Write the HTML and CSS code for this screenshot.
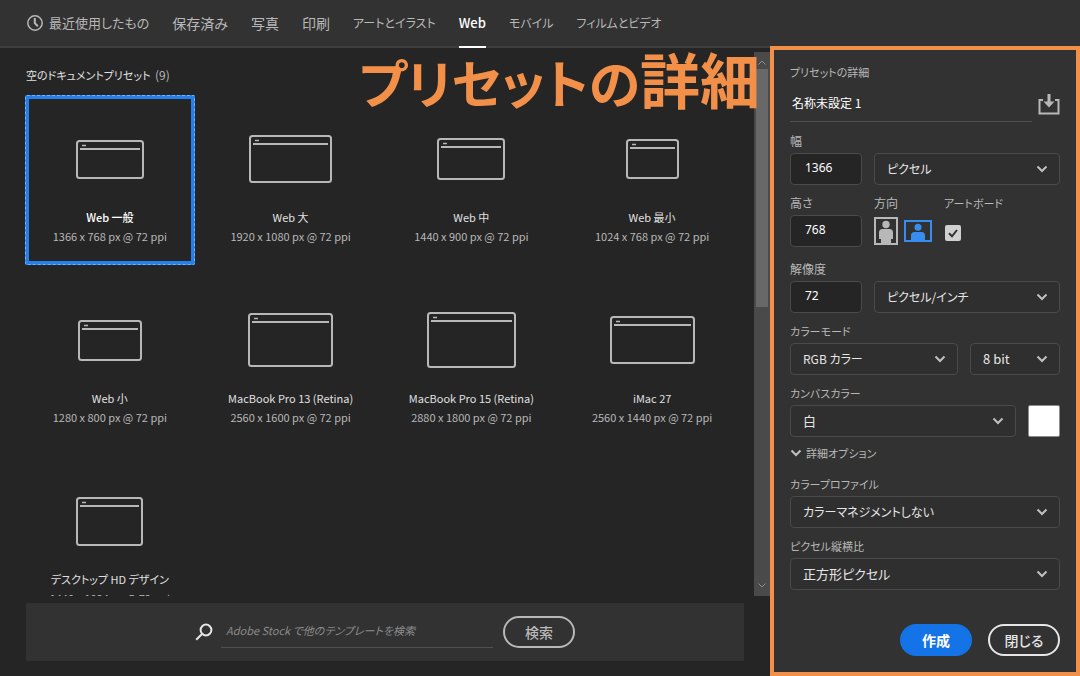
FILE: index.html
```html
<!DOCTYPE html>
<html lang="ja">
<head>
<meta charset="utf-8">
<title>新規ドキュメント</title>
<link rel="stylesheet" href="styles.css">
</head>
<body>
<div class="dialog">
  <nav class="tabs">
    <a class="tab tab-mixed" href="#recent"><svg class="clock" viewBox="0 0 16 16" width="16" height="16"><circle cx="8" cy="8" r="7.2"/><path class="hand" d="M7.8 3v5.2l3 3"/></svg>最近使用したもの</a>
    <a class="tab" href="#saved">保存済み</a>
    <a class="tab" href="#photo">写真</a>
    <a class="tab" href="#print">印刷</a>
    <a class="tab tab-kana" href="#art">アートとイラスト</a>
    <a class="tab tab-mixed tab-active" href="#web" aria-current="page">Web</a>
    <a class="tab tab-kana" href="#mobile">モバイル</a>
    <a class="tab tab-kana" href="#film">フィルムとビデオ</a>
  </nav>

  <main class="browser">
    <div class="scroller">
      <section class="presets">
        <h2 class="presets-title">空のドキュメントプリセット <span class="count">(9)</span></h2>
        <div class="preset-grid">
          <button class="preset preset-selected"><span class="thumb"><svg width="68" height="39"><rect class="frame" x="1" y="1" width="66" height="37" rx="2.500"/><path class="bar" d="M4 9h60"/><path class="dot" d="M6 5.500h4"/></svg></span><span class="name">Web 一般</span><span class="size">1366 x 768 px @ 72 ppi</span></button>
          <button class="preset"><span class="thumb"><svg width="83" height="48"><rect class="frame" x="1" y="1" width="81" height="46" rx="2.500"/><path class="bar" d="M4 9h75"/><path class="dot" d="M6 5.500h4"/></svg></span><span class="name">Web 大</span><span class="size">1920 x 1080 px @ 72 ppi</span></button>
          <button class="preset"><span class="thumb"><svg width="68" height="42"><rect class="frame" x="1" y="1" width="66" height="40" rx="2.500"/><path class="bar" d="M4 9h60"/><path class="dot" d="M6 5.500h4"/></svg></span><span class="name">Web 中</span><span class="size">1440 x 900 px @ 72 ppi</span></button>
          <button class="preset"><span class="thumb"><svg width="53" height="40"><rect class="frame" x="1" y="1" width="51" height="38" rx="2.500"/><path class="bar" d="M4 9h45"/><path class="dot" d="M6 5.500h4"/></svg></span><span class="name">Web 最小</span><span class="size">1024 x 768 px @ 72 ppi</span></button>
          <button class="preset"><span class="thumb"><svg width="64" height="41"><rect class="frame" x="1" y="1" width="62" height="39" rx="2.500"/><path class="bar" d="M4 9h56"/><path class="dot" d="M6 5.500h4"/></svg></span><span class="name">Web 小</span><span class="size">1280 x 800 px @ 72 ppi</span></button>
          <button class="preset"><span class="thumb"><svg width="85" height="54"><rect class="frame" x="1" y="1" width="83" height="52" rx="2.500"/><path class="bar" d="M4 9h77"/><path class="dot" d="M6 5.500h4"/></svg></span><span class="name">MacBook Pro 13 (Retina)</span><span class="size">2560 x 1600 px @ 72 ppi</span></button>
          <button class="preset"><span class="thumb"><svg width="89" height="56"><rect class="frame" x="1" y="1" width="87" height="54" rx="2.500"/><path class="bar" d="M4 9h81"/><path class="dot" d="M6 5.500h4"/></svg></span><span class="name">MacBook Pro 15 (Retina)</span><span class="size">2880 x 1800 px @ 72 ppi</span></button>
          <button class="preset"><span class="thumb"><svg width="85" height="48"><rect class="frame" x="1" y="1" width="83" height="46" rx="2.500"/><path class="bar" d="M4 9h77"/><path class="dot" d="M6 5.500h4"/></svg></span><span class="name">iMac 27</span><span class="size">2560 x 1440 px @ 72 ppi</span></button>
          <button class="preset"><span class="thumb"><svg width="67" height="49"><rect class="frame" x="1" y="1" width="65" height="47" rx="2.500"/><path class="bar" d="M4 9h59"/><path class="dot" d="M6 5.500h4"/></svg></span><span class="name">デスクトップ HD デザイン</span><span class="size">1440 x 1024 px @ 72 ppi</span></button>
        </div>
      </section>
      <div class="scrollbar" aria-hidden="true">
        <svg width="8" height="5" viewBox="0 0 8 5"><path d="M.5 4.500 4 1l3.500 3.500"/></svg>
        <div class="scroll-thumb"></div>
        <svg width="8" height="5" viewBox="0 0 8 5"><path d="M.5.5 4 4 7.500.5"/></svg>
      </div>
    </div>
    <form class="search">
      <svg class="search-icon" width="18" height="18" viewBox="0 0 18 18"><circle cx="11" cy="7" r="5.400"/><path d="M7 11 1.200 16.800"/></svg>
      <input class="search-input" type="text" aria-label="Adobe Stock 検索" placeholder="Adobe Stock で他のテンプレートを検索">
      <button class="pill pill-search" type="button">検索</button>
    </form>
  </main>

  <form class="details">
    <h2 class="details-title">プリセットの詳細</h2>
    <div class="name-row">
      <input class="name-input" type="text" aria-label="名前" value="名称未設定 1">
      <button class="save" type="button" aria-label="プリセットを保存"><svg width="22" height="21" viewBox="0 0 22 21"><path class="tray" d="M5 6H1.500v13.500h19V6H17"/><path class="stem" d="M11 0v8"/><path class="head" d="M5.500 7.500h11L11 13.500z"/></svg></button>
    </div>

    <div class="pair">
      <div class="field"><label for="w">幅</label><input class="box" id="w" type="text" value="1366"></div>
      <span class="select"><select class="kana" aria-label="単位"><option>ピクセル</option></select><svg class="chevron" width="12" height="8" viewBox="0 0 12 8"><path d="m1.500 1.500 4.500 4.500 4.500-4.500"/></svg></span>
    </div>

    <div class="pair">
      <div class="field"><label for="h">高さ</label><input class="box" id="h" type="text" value="768"></div>
      <div class="options">
        <div class="field"><span class="caption">方向</span>
          <div class="orient">
            <button type="button" aria-label="縦"><svg class="portrait" width="24" height="28" viewBox="0 0 24 28"><rect class="edge" x="1" y="1" width="22" height="26"/><circle cx="12" cy="7.500" r="3.700"/><path d="M5 15.500Q5 12 8.500 12h7q3.500 0 3.500 3.500V22h-2v5H7v-5H5z"/></svg></button>
            <button type="button" aria-label="横" aria-pressed="true"><svg class="landscape" width="28" height="22" viewBox="0 0 28 22"><rect class="edge" x="1" y="1" width="26" height="20"/><circle cx="14" cy="7.200" r="3.500"/><path d="M7 21v-5.500q0-3.500 3.500-3.500h7q3.500 0 3.500 3.500V21z"/></svg></button>
          </div>
        </div>
        <div class="field"><label class="kana-label" for="artboard">アートボード</label>
          <span class="check"><input id="artboard" type="checkbox" checked><svg width="16" height="16" viewBox="0 0 16 16"><path d="m4 8.300 3 3L12 5"/></svg></span>
        </div>
      </div>
    </div>

    <div class="pair pair-spaced">
      <div class="field"><label for="res">解像度</label><input class="box" id="res" type="text" value="72"></div>
      <span class="select"><select class="kana" aria-label="解像度の単位"><option>ピクセル/インチ</option></select><svg class="chevron" width="12" height="8" viewBox="0 0 12 8"><path d="m1.500 1.500 4.500 4.500 4.500-4.500"/></svg></span>
    </div>

    <div class="field">
      <label class="kana-label" for="mode">カラーモード</label>
      <div class="line">
        <span class="select grow"><select class="kana" id="mode"><option>RGB カラー</option></select><svg class="chevron" width="12" height="8" viewBox="0 0 12 8"><path d="m1.500 1.500 4.500 4.500 4.500-4.500"/></svg></span>
        <span class="select depth"><select aria-label="ビット数"><option>8 bit</option></select><svg class="chevron" width="12" height="8" viewBox="0 0 12 8"><path d="m1.500 1.500 4.500 4.500 4.500-4.500"/></svg></span>
      </div>
    </div>

    <div class="field">
      <label class="kana-label" for="canvas">カンバスカラー</label>
      <div class="line">
        <span class="select grow"><select id="canvas"><option>白</option></select><svg class="chevron" width="12" height="8" viewBox="0 0 12 8"><path d="m1.500 1.500 4.500 4.500 4.500-4.500"/></svg></span>
        <button class="swatch" type="button" aria-label="カンバスカラーを選択"></button>
      </div>
    </div>

    <button class="advanced kana-label" type="button" aria-expanded="true"><svg class="chevron" width="12" height="8" viewBox="0 0 12 8"><path d="m1.500 1.500 4.500 4.500 4.500-4.500"/></svg>詳細オプション</button>

    <div class="field field-first">
      <label class="kana-label" for="profile">カラープロファイル</label>
      <span class="select"><select class="kana" id="profile"><option>カラーマネジメントしない</option></select><svg class="chevron" width="12" height="8" viewBox="0 0 12 8"><path d="m1.500 1.500 4.500 4.500 4.500-4.500"/></svg></span>
    </div>
    <div class="field">
      <label class="kana-label" for="aspect">ピクセル縦横比</label>
      <span class="select"><select id="aspect"><option>正方形ピクセル</option></select><svg class="chevron" width="12" height="8" viewBox="0 0 12 8"><path d="m1.500 1.500 4.500 4.500 4.500-4.500"/></svg></span>
    </div>

    <div class="actions">
      <button class="pill pill-primary" type="button">作成</button>
      <button class="pill pill-close" type="button">閉じる</button>
    </div>
  </form>
  <p class="callout">プリセットの<span class="callout-kanji">詳細</span></p>
</div>
</body>
</html>
```
FILE: styles.css
```css
* { box-sizing: border-box; }

body {
  margin: 0;
  background: #252525;
  color: #b8b8b8;
  font: 12px/16px "Noto Sans CJK JP", sans-serif;
  font-feature-settings: "palt";
}

h2, p { margin: 0; font-weight: 400; }

button, input, select {
  margin: 0;
  padding: 0;
  border: 0;
  background: none;
  color: inherit;
  font: inherit;
  font-feature-settings: inherit;
}

svg { display: block; fill: none; }

.dialog {
  position: relative;
  display: grid;
  grid-template: 48px minmax(0, 1fr) / minmax(0, 1fr) 310px;
  height: 100vh;
}

/* Tabs */
.tabs {
  grid-column: 1 / -1;
  display: flex;
  gap: 23px;
  padding-left: 27px;
  background: #323232;
  border-bottom: 2px solid #3e3e3e;
}

.tab {
  display: flex;
  align-items: center;
  gap: 6px;
  height: 48px;
  border-bottom: 2px solid transparent;
  color: #b8b8b8;
  font-size: 14px;
  text-decoration: none;
  white-space: nowrap;
}

.tab-mixed { font-size: 13px; }
.tab-kana { font-size: 12px; }
.tab-active { border-color: #fff; color: #fff; font-weight: 500; }

.clock { stroke: #b8b8b8; stroke-width: 1.5; }
.clock .hand { stroke-width: 2; }

/* Preset browser */
.browser {
  display: flex;
  flex-direction: column;
  min-height: 0;
  padding-bottom: 15px;
}

.scroller { flex: 1; display: flex; min-height: 0; padding-top: 4px; }

.presets { flex: 1; overflow: hidden; padding: 14px 17px 0 25px; }

.presets-title { margin: 0 1px 11px; color: #e0e0e0; font-size: 11px; line-height: 18px; }
.count { margin-left: 2px; color: #b8b8b8; font-size: 12px; }

.preset-grid { display: grid; grid-template-columns: repeat(4, 1fr); gap: 11px; }

.preset {
  display: flex;
  flex-direction: column;
  align-items: center;
  height: 170px;
  padding-top: 24px;
  font-size: 11px;
  white-space: nowrap;
}

.preset-selected { outline: 1px dashed #6fb2f5; outline-offset: -1px; box-shadow: inset 0 0 0 4px #2680eb; border-radius: 2px; }

.thumb { display: grid; place-items: center; height: 80px; margin-bottom: 10px; }
.frame { stroke: #b8b8b8; stroke-width: 2; }
.bar { stroke: #b8b8b8; stroke-width: 2; }
.dot { stroke: #b8b8b8; stroke-width: 1.5; }

.name { margin-bottom: 3px; color: #e0e0e0; }
.preset-selected .name { color: #fff; font-weight: 500; }

.scrollbar {
  display: flex;
  flex-direction: column;
  align-items: center;
  width: 16px;
  padding: 8px 0;
  background: #4a4a4a;
}

.scrollbar svg { stroke: #8c8c8c; }
.scrollbar svg:last-child { margin-top: auto; }
.scroll-thumb { width: 12px; height: 45%; margin-top: 4px; background: #686868; }

/* Stock search */
.search {
  display: flex;
  align-items: center;
  justify-content: center;
  height: 58px;
  margin: 7px 26px 0;
  background: #323232;
}

.search-icon { margin-right: 8px; stroke: #e6e6e6; stroke-width: 2; }

.search-input {
  width: 272px;
  height: 32px;
  margin-right: 10px;
  padding: 0 5px 4px;
  border-bottom: 1px solid #505050;
  font-size: 11px;
  font-style: italic;
}

.search-input::placeholder { color: #8c8c8c; opacity: 1; }

.pill {
  width: 72px;
  height: 32px;
  border: 2px solid #b8b8b8;
  border-radius: 16px;
  font-size: 14px;
  font-weight: 500;
}

/* Details panel */
.details {
  display: flex;
  flex-direction: column;
  gap: 10px;
  margin-top: -2px;
  padding: 14px 16px 16px;
  border: 4px solid #f29049;
  background: #323232;
}

.details-title { font-size: 11px; line-height: 16px; }

.name-row { display: flex; align-items: center; gap: 6px; height: 36px; margin: -4px 0 1px; }

.name-input {
  flex: 1;
  min-width: 0;
  height: 36px;
  padding: 0 2px 2px;
  border-bottom: 1px solid #505050;
  color: #fff;
  font-feature-settings: normal;
}

.save { flex: none; }
.save .tray, .save .stem { stroke: #b8b8b8; stroke-width: 3; }
.save .tray { stroke-width: 2; }
.save .head { fill: #b8b8b8; }

.pair { display: grid; grid-template-columns: 72px minmax(0, 1fr); gap: 12px; align-items: end; }
.pair-spaced { margin-top: 4px; }

.field { display: flex; flex-direction: column; gap: 4px; min-width: 0; }
.field-first { margin-top: 5px; }
.kana-label { font-size: 11px; }

.box {
  width: 100%;
  height: 32px;
  padding: 0 14px 4px;
  border: 1px solid #4a4a4a;
  border-radius: 4px;
  background: #252525;
  color: #fff;
  font: 12px/16px "Noto Sans", sans-serif;
}

.select { display: grid; align-items: center; min-width: 0; }
.select > * { grid-area: 1 / 1; }

select {
  width: 100%;
  height: 32px;
  padding: 0 32px 0 12px;
  border: 1px solid #4a4a4a;
  border-radius: 4px;
  background: #2f2f2f;
  color: #e6e6e6;
  font-size: 13px;
  appearance: none;
}

select.kana { font-size: 12px; }

.chevron { stroke: #c0c0c0; stroke-width: 2; }
.select .chevron { justify-self: end; margin-right: 12px; pointer-events: none; }

.options { display: flex; gap: 12px; }
.orient { display: flex; align-items: center; gap: 6px; height: 32px; }
.portrait .edge { stroke: #b8b8b8; stroke-width: 2; fill: none; }
.portrait { fill: #b8b8b8; }
.landscape .edge { stroke: #378ef0; stroke-width: 2; fill: none; }
.landscape { fill: #378ef0; }

.check { display: grid; align-content: center; height: 32px; margin-top: 2px; margin-bottom: -2px; }
.check > * { grid-area: 1 / 1; }
.check input { width: 16px; height: 16px; margin-left: 1px; border-radius: 2px; background: #d0d0d0; appearance: none; }
.check svg { margin-left: 1px; stroke: #323232; stroke-width: 2; pointer-events: none; }

.line { display: flex; gap: 12px; }
.grow { flex: 1; }
.depth { width: 90px; }
.swatch { width: 32px; height: 32px; border: 1px solid #8c8c8c; border-radius: 2px; background: #fff; }

.advanced { display: flex; align-items: center; align-self: flex-start; gap: 4px; height: 16px; margin-top: -2px; }

.actions { display: flex; justify-content: flex-end; gap: 16px; margin-top: auto; }
.pill-primary { border-color: #1473e6; background: #1473e6; color: #fff; font-weight: 700; }
.pill-close { border-color: #e6e6e6; color: #e6e6e6; }

/* Callout over the preset browser */
.callout {
  position: absolute;
  top: 48px;
  right: 320px;
  color: #f29049;
  font-size: 52px;
  font-weight: 700;
  line-height: 60px;
  white-space: nowrap;
}

.callout-kanji { font-size: 60px; }
```
